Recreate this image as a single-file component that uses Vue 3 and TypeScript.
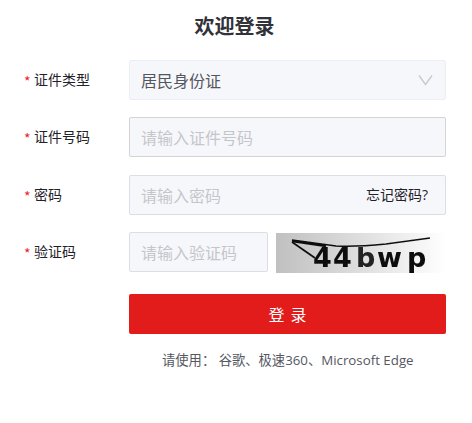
<script setup lang="ts">
interface Field { label: string; placeholder: string }
const idField: Field = { label: '证件号码', placeholder: '请输入证件号码' }
const pwdField: Field = { label: '密码', placeholder: '请输入密码' }
const codeField: Field = { label: '验证码', placeholder: '请输入验证码' }
</script>

<template>
  <div class="page">
    <h1 class="title">欢迎登录</h1>
    <form class="form" @submit.prevent>
      <div class="row">
        <label class="label"><i class="star">*</i>证件类型</label>
        <div class="control select">
          <span>居民身份证</span>
          <svg class="chev" width="15" height="12" viewBox="0 0 15 12" fill="none">
            <path d="M1 1.5 L7.5 10.5 L14 1.5" stroke="#c9cad0" stroke-width="1.4" />
          </svg>
        </div>
      </div>
      <div class="row">
        <label class="label"><i class="star">*</i>{{ idField.label }}</label>
        <input class="control input dark" :placeholder="idField.placeholder" />
      </div>
      <div class="row">
        <label class="label"><i class="star">*</i>{{ pwdField.label }}</label>
        <div class="pwd">
          <input class="control input" :placeholder="pwdField.placeholder" />
          <a class="forgot">忘记密码?</a>
        </div>
      </div>
      <div class="row">
        <label class="label"><i class="star">*</i>{{ codeField.label }}</label>
        <div class="code">
          <input class="control input" :placeholder="codeField.placeholder" />
          <svg class="captcha" width="170" height="40" viewBox="0 0 170 40">
            <defs>
              <linearGradient id="cg" x1="0" x2="1" y1="0" y2="0">
                <stop offset="0" stop-color="#c0c0c0" />
                <stop offset="0.5" stop-color="#dedede" />
                <stop offset="1" stop-color="#ffffff" />
              </linearGradient>
              <filter id="soft" x="-5%" y="-5%" width="110%" height="110%">
                <feGaussianBlur stdDeviation="0.4" />
              </filter>
              <filter id="noisy" x="-10%" y="-10%" width="120%" height="120%">
                <feGaussianBlur stdDeviation="0.6" />
              </filter>
            </defs>
            <rect width="170" height="40" fill="url(#cg)" />
            <g filter="url(#soft)" fill="#111">
              <text x="37" y="34" class="cap">4</text>
              <text x="57" y="34" class="cap">4</text>
              <text x="101" y="34" class="cap">w</text>
              <text x="131" y="34" class="cap">p</text>
              <path d="M16 7 L60 13 Q80 14 110 11 L154 5" stroke="#111" stroke-width="1.3" fill="none" />
              <path d="M16 9 L39 25" stroke="#111" stroke-width="1.6" fill="none" />
              <path d="M16 8 L50 13" stroke="#111" stroke-width="2.4" fill="none" />
            </g>
            <text x="80" y="34" class="cap" fill="#222" filter="url(#noisy)">b</text>
          </svg>
        </div>
      </div>
      <div class="row submit">
        <button class="btn" type="submit">登 录</button>
      </div>
      <p class="hint">请使用： 谷歌、极速360、Microsoft Edge</p>
    </form>
  </div>
</template>

<style>
html, body { margin: 0; background: #fff; }
</style>

<style scoped>
.page {
  width: 472px;
  height: 423px;
  overflow: hidden;
  font-family: "Open Sans", "Noto Sans CJK SC", sans-serif;
  color: #1f2229;
}
.title {
  margin: 0;
  padding-top: 13px;
  width: 469px;
  text-align: center;
  font-size: 20px;
  line-height: 28px;
  font-weight: 700;
  color: #31323a;
}
.form {
  margin-top: 19px;
  padding-left: 24px;
  width: 422px;
  display: flex;
  flex-direction: column;
  gap: 17.4px;
}
.row {
  display: flex;
  align-items: center;
  height: 40px;
}
.label {
  width: 105px;
  flex: none;
  font-size: 14px;
  line-height: 20px;
  display: flex;
  align-items: center;
}
.star {
  width: 10px;
  font-family: "Noto Sans CJK SC", sans-serif;
  font-style: normal;
  color: #f01c2c;
  font-size: 14px;
  line-height: 20px;
  padding-top: 2px;
}
.control {
  box-sizing: border-box;
  height: 40px;
  border-radius: 2px;
  background: #f6f7fb;
  border: 1px solid #dcdde5;
  padding: 0 11px;
  font-family: inherit;
  font-size: 16px;
  outline: none;
}
.select {
  flex: 1;
  display: flex;
  align-items: center;
  justify-content: space-between;
  border-color: #eceef4;
  color: #54565d;
  padding-right: 12px;
}
.input { width: 100%; padding-top: 2px; }
.dark { border-color: #d6d2d8; flex: 1; }
.input::placeholder { color: #c6c6ca; opacity: 1; }
.pwd { flex: 1; position: relative; }
.forgot {
  position: absolute;
  right: 18px;
  top: 10px;
  font-size: 14px;
  line-height: 20px;
  color: #1f2229;
}
.code {
  flex: 1;
  display: flex;
  gap: 8px;
}
.code .input { width: 139px; flex: none; }
.captcha { flex: none; display: block; margin-top: 1px; }
.cap {
  font-family: "DejaVu Sans", sans-serif;
  font-weight: 700;
  font-size: 27px;
}
.submit { margin-top: 4.6px; padding-left: 105px; box-sizing: border-box; }
.btn {
  width: 100%;
  height: 40px;
  border: none;
  border-radius: 2px;
  background: #e21b1b;
  color: #fff;
  font-family: inherit;
  font-size: 16px;
  word-spacing: 2px;
}
.hint {
  margin: -1px 0 0;
  padding-left: 138px;
  font-size: 13.3px;
  line-height: 18px;
  color: #55585f;
  white-space: nowrap;
}
</style>
